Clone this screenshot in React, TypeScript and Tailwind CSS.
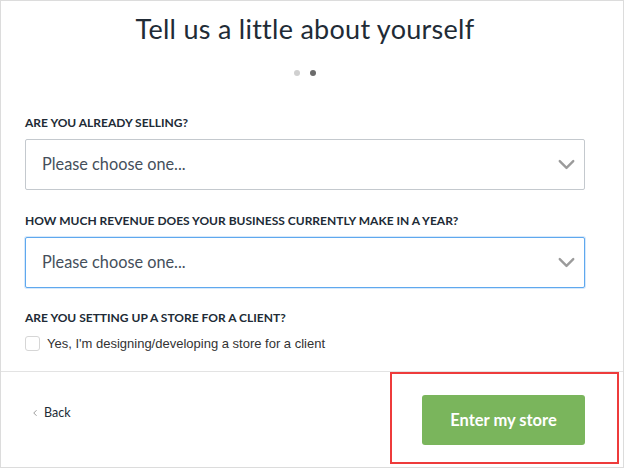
import { ChevronDown, ChevronLeft } from 'lucide-react'

const labelCls = "text-[12px] font-bold text-[#212b36] uppercase leading-none"

function Field({ label, focused }: { label: string; focused?: boolean }) {
  return (
    <div>
      <p className={labelCls}>{label}</p>
      <div
        className={`mt-[10px] h-[51px] rounded-[2px] border bg-white flex items-center justify-between pl-[16px] pr-[4px] ${
          focused ? 'border-[#5fa8ee] shadow-[0_0_0_1px_rgba(95,168,238,0.25)]' : 'border-[#c4c9ce]'
        }`}
      >
        <span className="text-[16.3px] text-[#454f5b]">Please choose one...</span>
        <ChevronDown size={27} strokeWidth={2.1} className="text-[#9b9b9b]" />
      </div>
    </div>
  )
}

export default function App() {
  return (
    <div
      className="w-[624px] h-[468px] border border-[#dcdcdc] bg-white flex flex-col overflow-hidden"
      style={{ fontFamily: 'Lato, "Open Sans", sans-serif' }}
    >
      <div className="flex-1 pl-[24px] pr-[38px]">
        <h1 className="text-center text-[27px] text-[#212b36] mt-[10px] leading-[36px] tracking-[0.01em]">
          Tell us a little about yourself
        </h1>
        <div className="flex justify-center gap-[10px] mt-[23px]">
          <span className="w-[6px] h-[6px] rounded-full bg-[#d0d0d0]" />
          <span className="w-[6px] h-[6px] rounded-full bg-[#6b6b6b]" />
        </div>
        <div className="mt-[41px] flex flex-col gap-[25px]">
          <Field label="Are you already selling?" />
          <Field label="How much revenue does your business currently make in a year?" focused />
        </div>
        <div className="mt-[24px]">
          <p className={labelCls}>Are you setting up a store for a client?</p>
          <label
            className="mt-[10px] flex items-center gap-[7px] text-[13px] text-[#333]"
            style={{ fontFamily: '"Liberation Sans", Arial, sans-serif' }}
          >
            <span className="w-[15px] h-[15px] rounded-[3px] border border-[#d6d6d6] bg-white" />
            Yes, I'm designing/developing a store for a client
          </label>
        </div>
      </div>
      <div className="h-[96px] border-t border-[#e3e3e3] flex items-start justify-between pl-[29px] pr-[4px]">
        <button className="mt-[34px] flex items-center gap-[4px] text-[12.5px] leading-[14px] text-[#212b36]">
          <ChevronLeft size={10} strokeWidth={2} className="text-[#888]" />
          Back
        </button>
        <div className="h-[92px] border-2 border-[#ee3b3b] pl-[30px] pr-[32px] pt-[21px]">
          <button className="w-[163px] h-[50px] rounded-[3px] bg-[#7ab55c] text-white text-[16.5px] font-bold">
            Enter my store
          </button>
        </div>
      </div>
    </div>
  )
}
